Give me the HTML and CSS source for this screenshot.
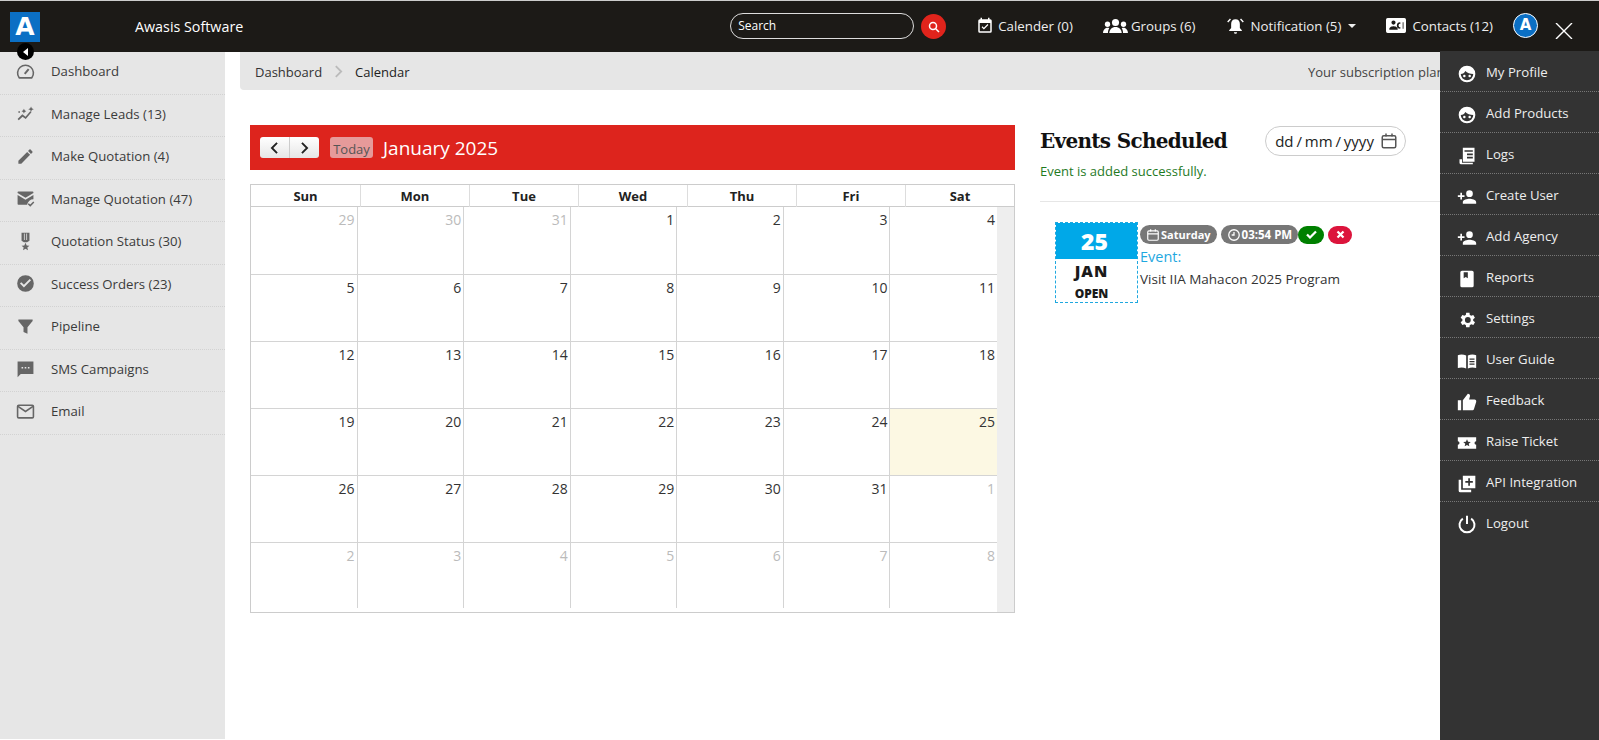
FILE: index.html
```html
<!DOCTYPE html>
<html lang="en">
<head>
  <meta charset="UTF-8" />
  <title>Calendar</title>
  <link rel="stylesheet" href="styles.css">
</head>
<body>

<svg class="sprites" aria-hidden="true">
  <symbol id="face" viewBox="0 0 24 24"><path d="M12 2a10 10 0 1 0 0 20 10 10 0 0 0 0-20zM4.500 12C7 12 9 11 10 8.500 12 11 16 12 19.500 12a7.500 7.500 0 0 1-15 0zM8.800 12.800a1.500 1.500 0 1 0 0 3 1.500 1.500 0 0 0 0-3zM15.200 12.800a1.500 1.500 0 1 0 0 3 1.500 1.500 0 0 0 0-3z" fill-rule="evenodd"/></symbol>
  <symbol id="adduser" viewBox="0 0 24 24"><path d="M15 12a4 4 0 1 0 0-8 4 4 0 0 0 0 8zM6 10V7H4v3H1v2h3v3h2v-3h3v-2H6zm9 4c-2.700 0-8 1.300-8 4v2h16v-2c0-2.700-5.300-4-8-4z"/></symbol>
</svg>

<header class="topbar">
  <div class="logo">A</div>
  <div class="brand">Awasis Software</div>
  <div class="top-right">
    <div class="search-box">Search</div>
    <div class="search-btn">
      <svg viewBox="0 0 24 24" width="12" height="12" fill="none" stroke="#fff" stroke-width="3"><circle cx="10" cy="10" r="7"/><path d="M15 15l7 7"/></svg>
    </div>
    <a class="top-link cal-link">
      <svg viewBox="0 0 24 24" width="18" height="18" fill="#fff"><path d="M19 3h-1V1h-2v2H8V1H6v2H5a2 2 0 0 0-2 2v14a2 2 0 0 0 2 2h14a2 2 0 0 0 2-2V5a2 2 0 0 0-2-2zm0 16H5V8h14v11zm-2.500-8.500L15.400 9.400 10.500 14.300 8.600 12.400 7.500 13.500l3 3 6-6z"/></svg>
      Calender (0)
    </a>
    <a class="top-link groups">
      <svg viewBox="0 0 28 18" width="25" height="16" fill="#fff"><circle cx="14" cy="5" r="4"/><path d="M7 17c0-4 3-7 7-7s7 3 7 7z"/><circle cx="5" cy="7" r="3"/><path d="M0 17c0-3 2-6 5-6 1 0 1.500.2 2 .5C6 13 5.500 15 5.500 17z"/><circle cx="23" cy="7" r="3"/><path d="M28 17c0-3-2-6-5-6-1 0-1.500.2-2 .5 1 1.500 1.500 3.500 1.500 5.500z"/></svg>
      Groups (6)
    </a>
    <a class="top-link">
      <svg viewBox="0 0 24 24" width="19" height="19" fill="#fff"><path d="M12 4c-3.500 0-5.500 2.500-5.500 6v5L4 18v1h16v-1l-2.500-3v-5c0-3.500-2-6-5.500-6zM10 20.500a2 2 0 0 0 4 0zM5 3L1.500 7l1.300 1.200L6.300 4.300zM19 3l3.500 4-1.300 1.200-3.500-3.900z"/></svg>
      Notification (5)
      <span class="caret"></span>
    </a>
    <a class="top-link">
      <svg viewBox="0 0 24 20" width="20" height="17" fill="#fff"><path d="M2 1h20a2 2 0 0 1 2 2v14a2 2 0 0 1-2 2H2a2 2 0 0 1-2-2V3a2 2 0 0 1 2-2zm7 8a2.500 2.500 0 1 0 0-5 2.500 2.500 0 0 0 0 5zm-5 6h10v-1c0-2-3.500-3-5-3s-5 1-5 3zm13-9a4 4 0 0 0 0 8l.5-1.500a2.500 2.500 0 0 1 0-5zm3 0v8h1V6z" fill-rule="evenodd"/></svg>
      Contacts (12)
    </a>
    <div class="avatar">A</div>
    <svg class="close-x" viewBox="0 0 18 16" width="18" height="16" stroke="#fff" stroke-width="1.400"><path d="M1 0l16 16M17 0L1 16"/></svg>
  </div>
</header>

<div class="main">
  <aside class="sidebar">
    <div class="collapse"><span></span></div>
    <ul>
      <li><svg viewBox="0 0 24 24" fill="none" stroke="#666" stroke-width="2"><path d="M4 20a10 10 0 1 1 16 0z" stroke-linejoin="round"/><path d="M11 15l5-6" stroke-width="2.500"/></svg>Dashboard</li>
      <li><svg viewBox="0 0 24 24" fill="#666"><path d="M2 19l6-6 4 3 6-7 1.500 1.300L12.300 19l-4-3-4.800 4.500zM10 6l1 2 2 1-2 1-1 2-1-2-2-1 2-1zM19 3l1 2.500L22.500 6.500 20 7.500 19 10l-1-2.500L15.500 6.500 18 5.500zM3 9h2v2H3z"/></svg>Manage Leads (13)</li>
      <li><svg viewBox="0 0 24 24" fill="#666"><path d="M3 17.300V21h3.700L17.800 9.900l-3.700-3.700zM20.700 7a1 1 0 0 0 0-1.400l-2.300-2.300a1 1 0 0 0-1.400 0l-1.800 1.800 3.700 3.700z"/></svg>Make Quotation (4)</li>
      <li><svg viewBox="0 0 24 24" fill="#666"><path d="M3 3h18a1 1 0 0 1 1 1v1l-10 6L2 5V4a1 1 0 0 1 1-1z"/><path d="M2 7.500l10 6 10-6V13c-4 0-7 2.500-8 7H3a1 1 0 0 1-1-1z"/><path d="M15.500 18.500l2.500 2.500 4.500-4.500" fill="none" stroke="#666" stroke-width="1.800"/></svg>Manage Quotation (47)</li>
      <li><svg viewBox="0 0 24 24" fill="#666"><path d="M7 1h10v10l-3 2h-4l-3-2zM10 2v8h1V2zM13 2v8h1V2zM12 13.500l1.500 3.500 3.500.3-2.700 2.300.9 3.400-3.200-1.900-3.200 1.900.9-3.400L7 17.300l3.500-.3z" fill-rule="evenodd"/></svg>Quotation Status (30)</li>
      <li><svg viewBox="0 0 24 24" fill="#666"><path d="M12 1.500a10.500 10.500 0 1 0 0 21 10.500 10.500 0 0 0 0-21zM10 17l-5-5 1.700-1.700 3.300 3.300 7.300-7.300L19 8z" fill-rule="evenodd"/></svg>Success Orders (23)</li>
      <li><svg viewBox="0 0 24 24" fill="#666"><path d="M3 3h18v2l-6.500 8v8l-5-2v-6L3 5z"/></svg>Pipeline</li>
      <li><svg viewBox="0 0 24 24" fill="#666"><path d="M2 3h20v16H6l-4 4zM7 10v2h2v-2zM11 10v2h2v-2zM15 10v2h2v-2z" fill-rule="evenodd"/></svg>SMS Campaigns</li>
      <li><svg viewBox="0 0 24 24" fill="none" stroke="#666" stroke-width="2"><rect x="2" y="4" width="20" height="16" rx="1.500"/><path d="M2.500 5.500L12 12l9.500-6.500"/></svg>Email</li>
    </ul>
  </aside>

  <main class="content">
    <div class="crumbs">
      <span class="crumb">Dashboard</span>
      <svg viewBox="0 0 10 14" width="9" height="13" fill="none" stroke="#bbb" stroke-width="2"><path d="M2 1l6 6-6 6"/></svg>
      <span class="crumb current">Calendar</span>
      <span class="plan">Your subscription plan</span>
    </div>

    <div class="columns">
      <section class="calendar">
        <div class="cal-head">
          <div class="btn-group">
            <span class="nav-btn"><svg viewBox="0 0 10 14" width="9" height="12" fill="none" stroke="#222" stroke-width="2.200"><path d="M8 1L2 7l6 6"/></svg></span>
            <span class="nav-btn"><svg viewBox="0 0 10 14" width="9" height="12" fill="none" stroke="#222" stroke-width="2.200"><path d="M2 1l6 6-6 6"/></svg></span>
          </div>
          <span class="today-btn">Today</span>
          <span class="cal-title">January 2025</span>
        </div>
        <div class="cal-table">
          <div class="week-head" id="weekHead"></div>
          <div class="cal-body">
            <div class="cal-grid" id="calGrid"></div>
            <div class="gutter"></div>
          </div>
        </div>
      </section>

      <section class="events">
        <div class="events-top">
          <div>
            <h2>Events Scheduled</h2>
            <div class="ok-msg">Event is added successfully.</div>
          </div>
          <div class="date-input">
            <span>dd / mm / yyyy</span>
            <svg viewBox="0 0 24 24" width="18" height="18" fill="none" stroke="#555" stroke-width="2"><rect x="3" y="5" width="18" height="16" rx="2"/><path d="M3 10h18M8 2v4M16 2v4"/></svg>
          </div>
        </div>
        <div class="event">
          <div class="date-card">
            <div class="day">25</div>
            <div class="month">JAN</div>
            <div class="state">OPEN</div>
          </div>
          <div class="event-info">
            <div class="pills">
              <span class="pill"><svg viewBox="0 0 24 24" width="14" height="14" fill="none" stroke="#fff" stroke-width="2"><rect x="3" y="5" width="18" height="16" rx="2"/><path d="M3 10h18M8 2v4M16 2v4"/></svg>Saturday</span>
              <span class="pill time"><svg viewBox="0 0 24 24" width="14" height="14" fill="none" stroke="#fff" stroke-width="2.200"><circle cx="12" cy="12" r="9"/><path d="M12 7v5H8"/></svg>03:54 PM</span>
              <span class="mini green"><svg viewBox="0 0 14 12" width="11" height="9" fill="none" stroke="#fff" stroke-width="3"><path d="M1 6l4 4 8-8"/></svg></span>
              <span class="mini red"><svg viewBox="0 0 12 12" width="9" height="9" fill="none" stroke="#fff" stroke-width="3"><path d="M2 2l8 8M10 2l-8 8"/></svg></span>
            </div>
            <div class="event-label">Event:</div>
            <div class="event-text">Visit IIA Mahacon 2025 Program</div>
          </div>
        </div>
      </section>
    </div>
  </main>

  <nav class="user-menu">
    <a><svg viewBox="0 0 24 24"><use href="#face"/></svg>My Profile</a>
    <a><svg viewBox="0 0 24 24"><use href="#face"/></svg>Add Products</a>
    <a><svg viewBox="0 0 24 24"><path d="M7 2h14v17H7zM9 5v2h10V5zM12 9v2h7V9zM12 13v2h7v-2zM3 16h3v4h13v2H5a2 2 0 0 1-2-2z" fill-rule="evenodd"/></svg>Logs</a>
    <a><svg viewBox="0 0 24 24"><use href="#adduser"/></svg>Create User</a>
    <a><svg viewBox="0 0 24 24"><use href="#adduser"/></svg>Add Agency</a>
    <a><svg viewBox="0 0 24 24"><path d="M6 2h12a2 2 0 0 1 2 2v16a2 2 0 0 1-2 2H6a2 2 0 0 1-2-2V4a2 2 0 0 1 2-2zm2 2v7l2.500-1.500L13 11V4z" fill-rule="evenodd"/></svg>Reports</a>
    <a><svg viewBox="0 0 24 24"><path d="M19.400 13a7.500 7.500 0 0 0 0-2l2.100-1.600-2-3.500-2.500 1a7.500 7.500 0 0 0-1.700-1L15 3.200h-4l-.4 2.700a7.500 7.500 0 0 0-1.700 1l-2.500-1-2 3.500L6.500 11a7.500 7.500 0 0 0 0 2l-2.100 1.600 2 3.500 2.500-1c.5.4 1.100.7 1.700 1l.4 2.700h4l.4-2.700c.6-.3 1.200-.6 1.700-1l2.500 1 2-3.500zM13 15.500a3.500 3.500 0 1 1 0-7 3.500 3.500 0 0 1 0 7z" fill-rule="evenodd"/></svg>Settings</a>
    <a><svg viewBox="0 0 24 24"><path d="M1 5c3-1 7-1 10 .5V21c-3-1.500-7-1.500-10-.5zM13 5.500C16 4 20 4 23 5v15.500c-3-1-7-1-10 .5zM15 9v1.500h6V9zM15 12v1.500h6V12zM15 15v1.500h6V15z" fill-rule="evenodd"/></svg>User Guide</a>
    <a><svg viewBox="0 0 24 24"><path d="M1 10h4v12H1zM7 22V10l6-8c2 0 3 1.500 2.500 3.500L14.500 9H21c1.500 0 2.500 1.500 2 3l-2.500 8c-.3 1.200-1.200 2-2.500 2z"/></svg>Feedback</a>
    <a><svg viewBox="0 0 24 24"><path d="M1 5h22v5a2 2 0 0 0 0 4v5H1v-5a2 2 0 0 0 0-4zm11 2.500l-1.300 3-3.200.3 2.400 2.100-.7 3.100 2.800-1.700 2.800 1.700-.7-3.100 2.400-2.100-3.200-.3z" fill-rule="evenodd"/></svg>Raise Ticket</a>
    <a><svg viewBox="0 0 24 24"><path d="M7 2h15v15H7zM13.500 5v3.500H10v2h3.500V14h2v-3.500H19v-2h-3.500V5zM2 7h3v12h12v3H4a2 2 0 0 1-2-2z" fill-rule="evenodd"/></svg>API Integration</a>
    <a><svg class="line" viewBox="0 0 24 24"><path d="M12 2v10M7 5.500a9 9 0 1 0 10 0"/></svg>Logout</a>
  </nav>
</div>

<script>
  const days = ["Sun", "Mon", "Tue", "Wed", "Thu", "Fri", "Sat"];
  const cells = [29,30,31,1,2,3,4,5,6,7,8,9,10,11,12,13,14,15,16,17,18,19,20,21,22,23,24,25,26,27,28,29,30,31,1,2,3,4,5,6,7,8];

  const head = document.getElementById("weekHead");
  days.forEach(d => {
    const div = document.createElement("div");
    div.textContent = d;
    head.appendChild(div);
  });

  const grid = document.getElementById("calGrid");
  let inMonth = false;
  let finished = false;
  cells.forEach(n => {
    if (n === 1) {
      if (inMonth) finished = true;
      inMonth = true;
    }
    const div = document.createElement("div");
    div.className = "cell";
    if (!inMonth || finished) div.className += " other";
    if (inMonth && !finished && n === 25) div.className += " today";
    div.textContent = n;
    grid.appendChild(div);
  });
</script>
</body>
</html>
```

FILE: styles.css
```css
* {
  box-sizing: border-box;
}

html, body {
  margin: 0;
  height: 100%;
  overflow: hidden;
}

body {
  font-family: "Open Sans", sans-serif;
  font-size: 13.2px;
  color: #333;
  background: #fff;
  display: flex;
  flex-direction: column;
  height: 740px;
  position: relative;
}

.sprites {
  display: none;
}

/* top bar */
.topbar {
  height: 52px;
  flex: none;
  background: #1c1a17;
  border-top: 1px solid #ccc;
  display: flex;
  align-items: center;
  color: #fff;
}

.logo {
  width: 30px;
  height: 30px;
  margin: 0 0 0 10px;
  background: #0b6fc4;
  color: #fff;
  font: bold 25px/30px "DejaVu Sans", sans-serif;
  text-align: center;
}

.brand {
  margin-left: 95px;
  font-size: 14.3px;
  font-weight: 500;
}

.top-right {
  margin-left: auto;
  display: flex;
  align-items: center;
  padding: 0 61px 2px 0;
}

.search-box {
  width: 184px;
  height: 26px;
  margin-top: 1px;
  border: 1px solid #ddd;
  border-radius: 13px;
  padding: 0 7px;
  font-size: 12px;
  line-height: 24px;
}

.search-btn {
  width: 25px;
  height: 25px;
  margin: 2px 0 0 7px;
  border-radius: 50%;
  background: #e0241c;
  display: flex;
  align-items: center;
  justify-content: center;
}

.top-link {
  display: flex;
  align-items: center;
  gap: 6px;
  margin-left: 30px;
  font-size: 13.3px;
  color: #eee;
}

.top-link.cal-link {
  gap: 4px;
}

.top-link.groups {
  gap: 3px;
}

.caret {
  width: 0;
  height: 0;
  margin-left: 1px;
  border: 4px solid transparent;
  border-top-color: #eee;
  border-bottom: 0;
}

.avatar {
  width: 25px;
  height: 25px;
  margin-left: 20px;
  border-radius: 50%;
  background: #0b6fc4;
  border: 1px solid #fff;
  color: #fff;
  font: bold 15px/23px "DejaVu Sans", sans-serif;
  text-align: center;
}

.close-x {
  position: absolute;
  top: 23px;
  right: 26px;
}

/* layout */
.main {
  flex: 1;
  display: flex;
  min-height: 0;
}

/* left menu */
.sidebar {
  width: 225px;
  flex: none;
  height: 687px;
  background: #e6e6e6;
  position: relative;
}

.collapse {
  position: absolute;
  top: -9px;
  left: 17px;
  width: 17px;
  height: 17px;
  border-radius: 50%;
  background: #000;
  display: flex;
  align-items: center;
  justify-content: center;
}

.collapse span {
  width: 0;
  height: 0;
  border: 4px solid transparent;
  border-right: 5px solid #fff;
  border-left: 0;
}

.sidebar ul {
  list-style: none;
  margin: 0;
  padding: 0;
}

.sidebar li {
  height: 42.5px;
  display: flex;
  align-items: center;
  padding: 0 0 3px 16px;
  gap: 16px;
  border-bottom: 1px dotted #d2d2d2;
  color: #3b3b3b;
}

.sidebar li svg {
  width: 19px;
  height: 19px;
  flex: none;
}

/* content */
.content {
  flex: 1;
  min-width: 0;
  padding: 0 0 0 15px;
}

.crumbs {
  height: 38px;
  background: #e6e6e6;
  border-radius: 0 0 0 4px;
  display: flex;
  align-items: center;
  padding: 1px 0 0 15px;
  gap: 12px;
  font-size: 13px;
  white-space: nowrap;
}

.crumb.current {
  color: #222;
}

.plan {
  margin-left: auto;
  margin-right: 159px;
  width: 132px;
  overflow: hidden;
  color: #444;
}

.columns {
  display: flex;
  margin-top: 35px;
  padding-left: 10px;
}

.calendar {
  width: 765px;
  flex: none;
}

.cal-head {
  height: 45px;
  background: #dd241d;
  display: flex;
  align-items: center;
  padding-left: 10px;
  color: #fff;
}

.btn-group {
  display: flex;
  width: 59px;
  height: 21px;
  border-radius: 3px;
  background: linear-gradient(#fff, #e6e6e6);
  overflow: hidden;
}

.nav-btn {
  flex: 1;
  display: flex;
  align-items: center;
  justify-content: center;
}

.nav-btn + .nav-btn {
  border-left: 1px solid #ccc;
}

.today-btn {
  margin-left: 11px;
  width: 43px;
  height: 21px;
  border-radius: 3px;
  background: #e69a9a;
  color: #555;
  font-size: 13px;
  line-height: 24px;
  text-align: center;
}

.cal-title {
  margin-left: 10px;
  padding-top: 1px;
  font-size: 19px;
}

.cal-table {
  margin-top: 14px;
  height: 429px;
  border: 1px solid #ccc;
}

.week-head {
  display: grid;
  grid-template-columns: repeat(7, 1fr);
  height: 22px;
  border-bottom: 1px solid #ccc;
}

.week-head div {
  text-align: center;
  font-weight: 700;
  font-size: 13px;
  line-height: 22px;
  color: #222;
  border-left: 1px solid #ddd;
}

.week-head div:first-child {
  border-left: 0;
}

.cal-body {
  display: flex;
  height: 405px;
}

.cal-grid {
  width: 746px;
  display: grid;
  grid-template-columns: repeat(7, 1fr);
  grid-template-rows: 68px repeat(4, 67.1px) 65px;
}

.gutter {
  flex: 1;
  background: #eee;
}

.cell {
  text-align: right;
  padding: 3px 2px 0 0;
  border-right: 1px solid #d4d4d4;
  border-bottom: 1px solid #d4d4d4;
  font-size: 14px;
  color: #333;
}

.cell:nth-child(7n) {
  border-right: 0;
}

.cell:nth-last-child(-n+7) {
  border-bottom: 0;
}

.cell.other {
  color: #bbb;
}

.cell.today {
  background: #fcf8e3;
}

/* events */
.events {
  flex: 1;
  padding-left: 25px;
  min-width: 0;
}

.events-top {
  display: flex;
  height: 77px;
  border-bottom: 1px solid #e6e6e6;
}

.events-top h2 {
  margin: 0;
  font: bold 20px/32px "DejaVu Serif", serif;
  letter-spacing: -0.7px;
  color: #111;
  white-space: nowrap;
}

.ok-msg {
  margin-top: 5px;
  font-size: 13px;
  color: #1f7a1f;
}

.date-input {
  margin: 1px 0 0 38px;
  width: 141px;
  height: 30px;
  border: 1px solid #ccc;
  border-radius: 15px;
  display: flex;
  align-items: center;
  gap: 6px;
  padding-left: 9px;
  font-size: 15px;
  word-spacing: -1px;
  color: #222;
  white-space: nowrap;
}

.event {
  display: flex;
  margin: 20px 0 0 15px;
}

.date-card {
  width: 83px;
  height: 81px;
  border: 1px dashed #1fa8df;
  text-align: center;
  color: #1a1a1a;
}

.day {
  background: #00a8e8;
  height: 36px;
  padding-right: 4px;
  color: #fff;
  font-weight: 800;
  font-size: 23px;
  line-height: 37px;
}

.month {
  padding-right: 10px;
  font-weight: 800;
  font-size: 16px;
  letter-spacing: 1px;
  line-height: 25px;
}

.state {
  margin-top: 1px;
  padding-right: 10px;
  font-weight: 800;
  font-size: 12px;
  line-height: 18px;
}

.event-info {
  margin-left: 2px;
}

.pills {
  display: flex;
  align-items: center;
  height: 19px;
  margin-top: 3px;
}

.pill {
  display: flex;
  align-items: center;
  gap: 1px;
  height: 19px;
  padding: 0 6px;
  margin-right: 4px;
  border-radius: 10px;
  background: #777;
  color: #fff;
  font-size: 11px;
  font-weight: 700;
}

.pill.time {
  margin-right: 0;
  font-size: 11.5px;
}

.mini {
  width: 24px;
  height: 18px;
  border-radius: 9px;
  display: flex;
  align-items: center;
  justify-content: center;
}

.mini.green {
  width: 26px;
  background: #008000;
  margin-right: 4px;
}

.mini.red {
  background: #dc143c;
}

.event-label {
  margin-top: 3px;
  font-size: 14.5px;
  color: #1fa8df;
}

.event-text {
  margin-top: 4px;
  font-size: 13.5px;
  color: #333;
}

/* user menu, sits over the content */
.user-menu {
  position: absolute;
  top: 51px;
  right: 0;
  bottom: 0;
  width: 159px;
  background: #333;
}

.user-menu a {
  display: flex;
  align-items: center;
  gap: 9px;
  height: 41px;
  padding: 2px 0 0 17px;
  border-bottom: 1px dotted #777;
  font-size: 13.2px;
  color: #eee;
}

.user-menu a:last-child {
  padding-top: 0;
  border-bottom: 0;
}

.user-menu svg {
  width: 20px;
  height: 20px;
  margin-top: 3px;
  flex: none;
  fill: #fff;
}

.user-menu svg.line {
  fill: none;
  stroke: #fff;
  stroke-width: 2.4;
}
```
